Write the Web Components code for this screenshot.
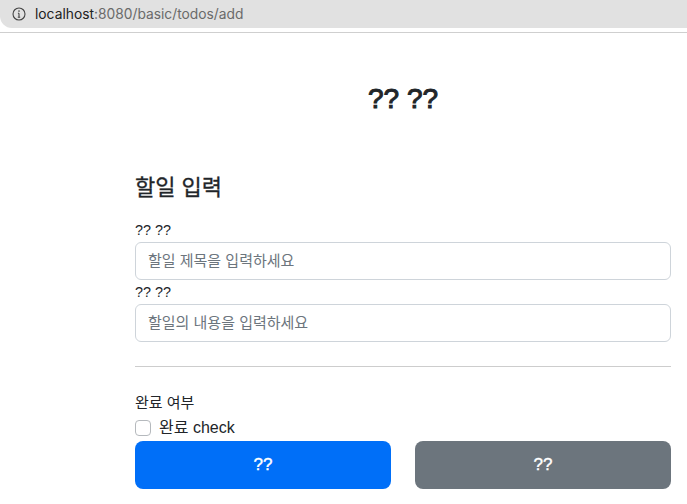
<!DOCTYPE html>
<html lang="ko">
<head>
<meta charset="utf-8">
<title>todo add</title>
<style>
  html, body { margin: 0; padding: 0; background: #fff; }
  body {
    font-family: "Liberation Sans", "Noto Sans CJK KR", sans-serif;
    color: #212529;
    height: 504px;
    overflow: hidden;
  }
</style>
</head>
<body>
<address-bar host="localhost" path=":8080/basic/todos/add"></address-bar>
<todo-form>
  <page-title>?? ??</page-title>
  <section-title>할일 입력</section-title>
  <text-field label="?? ??" placeholder="할일 제목을 입력하세요"></text-field>
  <text-field label="?? ??" placeholder="할일의 내용을 입력하세요"></text-field>
  <form-rule></form-rule>
  <check-field legend="완료 여부" label="완료 check"></check-field>
  <button-row>
    <action-button>??</action-button>
    <action-button kind="secondary">??</action-button>
  </button-row>
</todo-form>
<script>
const define = (tag, cls) => {
  if (window.customElements.get(tag) === undefined) window.customElements.define(tag, cls);
};

// small base class: set the shadow markup once
class Base extends HTMLElement {
  constructor() {
    super();
    this.dom = this.attachShadow({ mode: "open" });
  }
  connectedCallback() {
    this.dom.innerHTML = this.markup();
  }
  markup() {
    return "";
  }
}

define("address-bar", class extends Base {
  markup() {
    return `
      <style>
        :host { display: block; height: 33px; box-sizing: border-box; border-bottom: 1px solid #cfcfcf; background: #fff; }
        .pill { height: 28px; background: #e1e1e1; border-radius: 0 0 0 12px; display: flex; align-items: center; padding-left: 12px; gap: 9px;
          font: 13.8px/28px Inter, "Liberation Sans", sans-serif; color: #6a6a6a; }
        b { font-weight: 400; color: #222; }
        svg { display: block; flex: none; }
      </style>
      <div class="pill">
        <svg width="14" height="14" viewBox="0 0 14 14" fill="none" stroke="#444" stroke-width="1.1">
          <circle cx="7" cy="7" r="6"/>
          <path d="M7 6.2V10.2M5.8 10.2H8.2M5.9 6.2H7"/>
          <circle cx="7" cy="4.1" r=".8" fill="#444" stroke="none"/>
        </svg>
        <span><b>${this.getAttribute("host")}</b>${this.getAttribute("path")}</span>
      </div>`;
  }
});

define("todo-form", class extends Base {
  markup() {
    return `
      <style>
        :host { display: block; padding: 0 16px 0 135px; }
      </style>
      <slot></slot>`;
  }
});

define("page-title", class extends Base {
  markup() {
    return `
      <style>
        /* no medium weight in Liberation, thicken the regular with a stroke */
        :host { display: block; padding-top: 47px; text-align: center; font-size: 28px; line-height: 38px; font-weight: 400; color: #212529; -webkit-text-stroke: 1px #212529; }
      </style>
      <slot></slot>`;
  }
});

define("section-title", class extends Base {
  markup() {
    return `
      <style>
        :host { display: block; margin-top: 55px; font-size: 22px; line-height: 29px; font-weight: 400; color: #212529; margin-bottom: 16px; -webkit-text-stroke: .3px #212529; }
      </style>
      <slot></slot>`;
  }
});

define("text-field", class extends Base {
  markup() {
    return `
      <style>
        :host { display: block; }
        label { display: block; font-size: 14.4px; line-height: 24px; height: 24px; color: #212529; }
        input { display: block; width: 100%; height: 38px; box-sizing: border-box; margin: 0; padding: 5px 12px 7px;
          border: 1px solid #ced4da; border-radius: 6px; background: #fff; outline: 0;
          font: 15px/24px "Liberation Sans", "Noto Sans CJK KR", sans-serif; color: #212529; }
        input::placeholder { color: #6c757d; opacity: 1; }
      </style>
      <label>${this.getAttribute("label")}</label>
      <input type="text" placeholder="${this.getAttribute("placeholder")}">`;
  }
});

define("form-rule", class extends Base {
  markup() {
    return `
      <style>
        :host { display: block; height: 1px; margin: 24px 0 0; background: #cdcdcd; }
      </style>`;
  }
});

define("check-field", class extends Base {
  markup() {
    return `
      <style>
        :host { display: block; margin-top: 24px; font-size: 15px; line-height: 24px; color: #212529; }
        .row { display: flex; align-items: center; gap: 8px; font-size: 16px; }
        .row span:last-child { padding-top: 1px; }
        .box { width: 16px; height: 16px; box-sizing: border-box; border: 1px solid #b5b9bd; border-radius: 4px; background: #fff; flex: none; }
      </style>
      <div>${this.getAttribute("legend")}</div>
      <div class="row"><span class="box"></span><span>${this.getAttribute("label")}</span></div>`;
  }
});

define("button-row", class extends Base {
  markup() {
    return `
      <style>
        :host { display: grid; grid-template-columns: 1fr 1fr; column-gap: 24px; margin-top: 1px; }
      </style>
      <slot></slot>`;
  }
});

define("action-button", class extends Base {
  markup() {
    const bg = this.getAttribute("kind") === "secondary" ? "#6c757d" : "#006ff8";
    return `
      <style>
        :host { display: flex; align-items: center; justify-content: center; height: 48px; border-radius: 8px;
          background: ${bg}; color: #fff; font-size: 17px; font-weight: 400; -webkit-text-stroke: .4px #fff; }
      </style>
      <slot></slot>`;
  }
});
</script>
</body>
</html>
